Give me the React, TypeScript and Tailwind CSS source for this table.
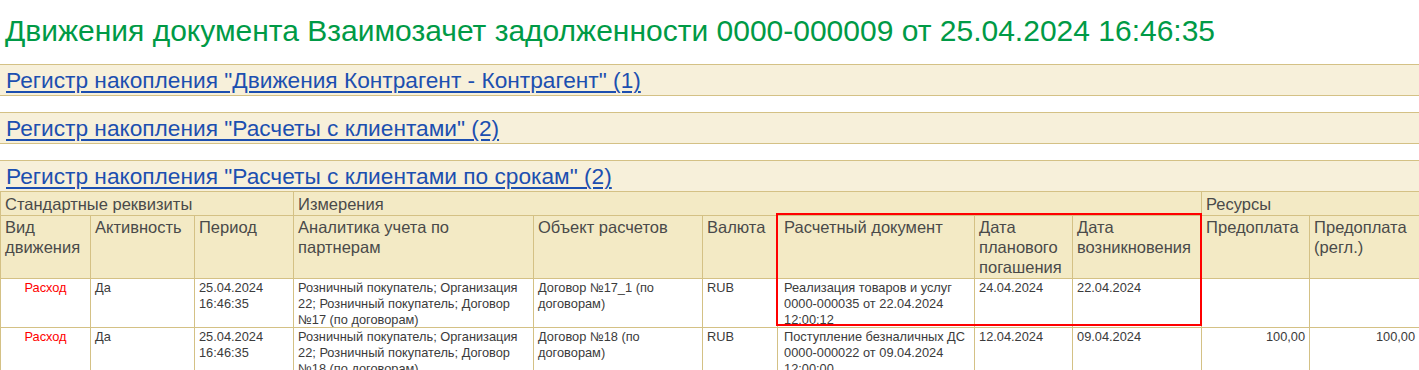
import React from "react";

type Row = {
    kind: string;
    active: string;
    period: string[];
    analytics: string[];
    object: string[];
    currency: string;
    doc: string[];
    planDate: string;
    originDate: string;
    prepay: string;
    prepayReg: string;
};

const rows: Row[] = [
    {
        kind: "Расход",
        active: "Да",
        period: ["25.04.2024", "16:46:35"],
        analytics: ["Розничный покупатель; Организация", "22; Розничный покупатель; Договор", "№17 (по договорам)"],
        object: ["Договор №17_1 (по", "договорам)"],
        currency: "RUB",
        doc: ["Реализация товаров и услуг", "0000-000035 от 22.04.2024", "12:00:12"],
        planDate: "24.04.2024",
        originDate: "22.04.2024",
        prepay: "",
        prepayReg: "",
    },
    {
        kind: "Расход",
        active: "Да",
        period: ["25.04.2024", "16:46:35"],
        analytics: ["Розничный покупатель; Организация", "22; Розничный покупатель; Договор", "№18 (по договорам)"],
        object: ["Договор №18 (по", "договорам)"],
        currency: "RUB",
        doc: ["Поступление безналичных ДС", "0000-000022 от 09.04.2024", "12:00:00"],
        planDate: "12.04.2024",
        originDate: "09.04.2024",
        prepay: "100,00",
        prepayReg: "100,00",
    },
];

const widths = [90, 104, 99, 240, 169, 75, 197, 98, 129, 108, 110];

function RegisterBar({ title, last }: { title: string; last?: boolean }) {
    return (
        <div className={`bg-[#f7f0da] border-t border-[#d4c185] h-[32px] pl-[6px] flex items-start pt-[3px] ${last ? "" : "border-b mb-[16px]"}`}>
            <a href="#" className="text-[#1c4fb0] text-[22.7px] leading-[24px] underline decoration-[2px] underline-offset-[3px] whitespace-nowrap">
                {title}
            </a>
        </div>
    );
}

function Cell({ lines, className = "" }: { lines: string[]; className?: string }) {
    return (
        <td className="border border-[#d4c185] align-top p-0">
            <div className={`h-[48px] overflow-hidden px-[4px] pt-[1px] text-[12.8px] leading-[16px] text-[#3b3b3b] ${className}`}>
                {lines.map((l, i) => (
                    <div key={i} className="whitespace-nowrap">{l}</div>
                ))}
            </div>
        </td>
    );
}

export default function App() {
    const head = "border border-[#d4c185] align-top text-left font-normal px-[4px] whitespace-nowrap";

    return (
        <div className="bg-white w-[1419px] h-[370px] overflow-hidden font-['Liberation_Sans',Arial,sans-serif]">
            {/* Title */}
            <h1 className="text-[#009a46] text-[30px] leading-[32px] pl-[5px] pt-[15px] h-[64px] whitespace-nowrap">
                Движения документа Взаимозачет задолженности 0000-000009 от 25.04.2024 16:46:35
            </h1>

            <RegisterBar title={'Регистр накопления "Движения Контрагент - Контрагент" (1)'} />
            <RegisterBar title={'Регистр накопления "Расчеты с клиентами" (2)'} />
            <RegisterBar title={'Регистр накопления "Расчеты с клиентами по срокам" (2)'} last />

            {/* Table */}
            <div className="relative">
                <table className="table-fixed border-collapse w-[1420px] -mt-px">
                    <colgroup>
                        {widths.map((w, i) => (
                            <col key={i} style={{ width: w }} />
                        ))}
                    </colgroup>
                    <thead className="bg-[#f3eac5] text-[#4a4a4a] text-[16.5px]">
                        <tr className="h-[24px]">
                            <th colSpan={3} className={`${head} leading-[20px] pt-[2px]`}>Стандартные реквизиты</th>
                            <th colSpan={6} className={`${head} leading-[20px] pt-[2px]`}>Измерения</th>
                            <th colSpan={2} className={`${head} leading-[20px] pt-[2px]`}>Ресурсы</th>
                        </tr>
                        <tr className="h-[63px] leading-[20px]">
                            <th className={`${head} pt-[1px]`}>Вид<br />движения</th>
                            <th className={`${head} pt-[1px]`}>Активность</th>
                            <th className={`${head} pt-[1px]`}>Период</th>
                            <th className={`${head} pt-[1px]`}>Аналитика учета по<br />партнерам</th>
                            <th className={`${head} pt-[1px]`}>Объект расчетов</th>
                            <th className={`${head} pt-[1px]`}>Валюта</th>
                            <th className={`${head} pt-[1px] pl-[6px]`}>Расчетный документ</th>
                            <th className={`${head} pt-[1px]`}>Дата<br />планового<br />погашения</th>
                            <th className={`${head} pt-[1px]`}>Дата<br />возникновения</th>
                            <th className={`${head} pt-[1px]`}>Предоплата</th>
                            <th className={`${head} pt-[1px]`}>Предоплата<br />(регл.)</th>
                        </tr>
                    </thead>
                    <tbody className="bg-white">
                        {rows.map((r, i) => (
                            <tr key={i}>
                                <Cell lines={[r.kind]} className="text-center !text-[#ff0000]" />
                                <Cell lines={[r.active]} />
                                <Cell lines={r.period} />
                                <Cell lines={r.analytics} />
                                <Cell lines={r.object} />
                                <Cell lines={[r.currency]} />
                                <Cell lines={r.doc} className="!pl-[6px]" />
                                <Cell lines={[r.planDate]} />
                                <Cell lines={[r.originDate]} />
                                <Cell lines={[r.prepay]} className="text-right" />
                                <Cell lines={[r.prepayReg]} className="text-right" />
                            </tr>
                        ))}
                    </tbody>
                </table>
                {/* highlight frame */}
                <div className="absolute left-[776px] top-[22px] w-[426px] h-[113px] border-2 border-[#ff0000] pointer-events-none" />
            </div>
        </div>
    );
}
